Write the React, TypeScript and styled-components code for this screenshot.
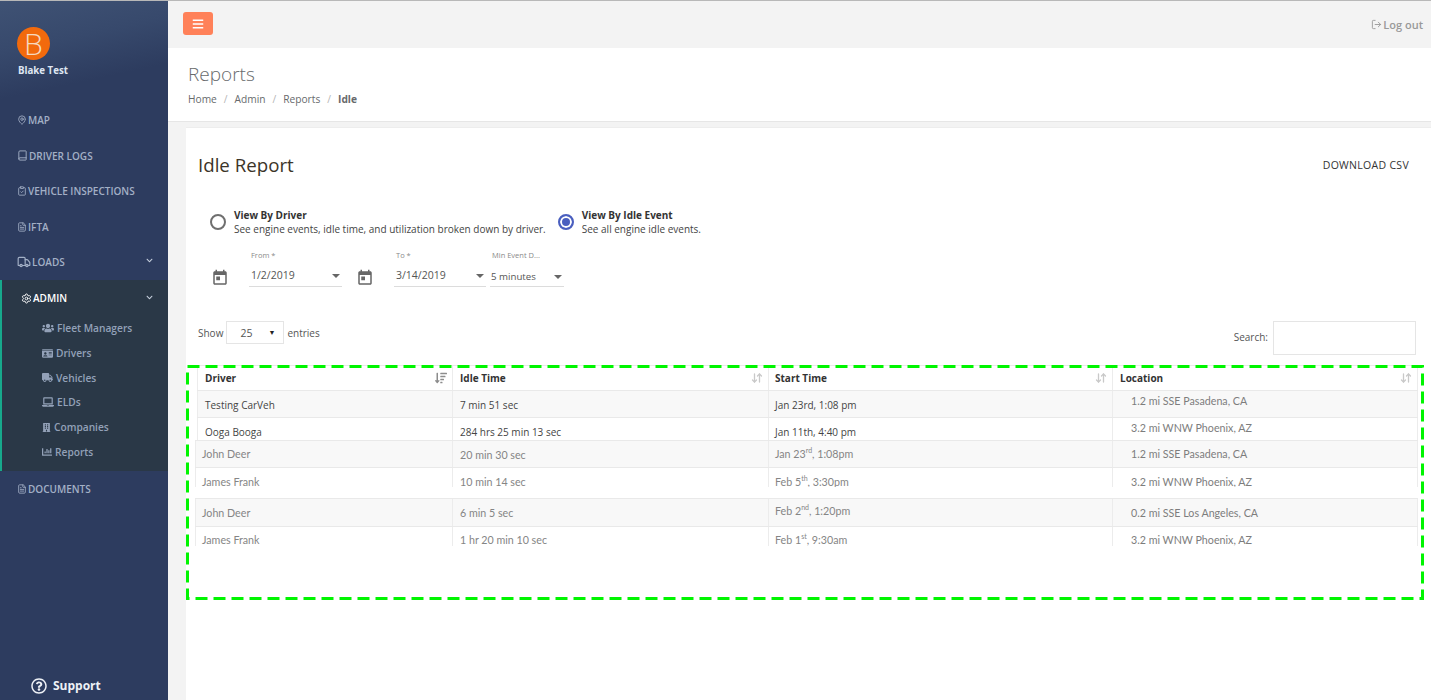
import React, { FC, ReactNode } from 'react'
import styled, { createGlobalStyle } from 'styled-components'
import { ArrowDownUp, Book, ClipboardCheck, FileText, LogOut, MapPin, Settings, Truck } from 'lucide-react'
import {
  FaBars,
  FaBuilding,
  FaChartBar,
  FaChevronDown,
  FaIdCard,
  FaLaptop,
  FaRegQuestionCircle,
  FaSortAmountDown,
  FaTruck,
  FaUsers,
} from 'react-icons/fa'

const GlobalStyle = createGlobalStyle`
  html, body { margin: 0; padding: 0; background: #fff; }
  * { box-sizing: border-box; }
  body { font-family: "Open Sans", "Liberation Sans", sans-serif; }
`

const Shell = styled.div`
  display: flex;
  height: 700px;
  overflow: hidden;
  border-top: 1px solid #b8b8b8;
`

const Sidebar = styled.aside`
  position: relative;
  width: 168px;
  flex: none;
  height: 100%;
  background: #2d3c5f;
  display: flex;
  flex-direction: column;
`

const Profile = styled.div`
  height: 101px;
  padding: 26px 0 0 17px;
  background: linear-gradient(168deg, #3f5274 0%, #37496c 38%, #2d3c5f 72%);
`

const Avatar = styled.div`
  width: 33px;
  height: 33px;
  border-radius: 50%;
  background: #f26a0c;
  color: #f6d9bf;
  font-size: 30px;
  line-height: 33px;
  font-weight: 300;
  text-align: center;
`

const ProfileName = styled.div`
  margin-top: 4px;
  margin-left: 1px;
  font-size: 9.7px;
  line-height: 14px;
  font-weight: 700;
  color: #dfe6f2;
`

const NavItem = styled.div<{ $active?: boolean }>`
  height: 35.5px;
  display: flex;
  align-items: center;
  gap: 1px;
  padding: 0 15px 0 17px;
  font-size: 10px;
  font-weight: 600;
  color: ${(props) => (props.$active ? '#fff' : '#a3b0c6')};
  svg { flex: none; }
`

const NavList = styled.nav`
  padding-top: 0.5px;
`

const NavChevron = styled.span<{ $top?: number }>`
  margin-left: auto;
  display: flex;
  margin-top: ${(props) => props.$top ?? -4}px;
  color: #c5cedc;
`

const AdminBlock = styled.div`
  height: 191px;
  background: #2a3847;
  border-left: 2px solid #17a98c;
`

const AdminHead = styled(NavItem)`
  padding-left: 19px;
  height: 36px;
`

const SubList = styled.div`
  display: flex;
  flex-direction: column;
  padding: 0 0 0 40px;
`

const SubItem = styled.div`
  height: 24.7px;
  display: flex;
  align-items: center;
  gap: 3px;
  font-size: 10.2px;
  font-weight: 600;
  color: #93a1b8;
`

const Support = styled.div`
  position: absolute;
  left: 31px;
  bottom: 6px;
  display: flex;
  align-items: center;
  gap: 6px;
  font-size: 12px;
  font-weight: 700;
  color: #eef1f6;
`

const Main = styled.main`
  flex: 1;
  min-width: 0;
  background: #f3f3f3;
  display: flex;
  flex-direction: column;
`

const TopBar = styled.header`
  height: 47px;
  flex: none;
  padding: 11px 8px 0 15px;
  display: flex;
  justify-content: space-between;
  align-items: flex-start;
`

const MenuButton = styled.button`
  width: 30px;
  height: 23px;
  padding: 0;
  border: 0;
  border-radius: 3px;
  background: #ff8159;
  color: #fff;
  display: flex;
  align-items: center;
  justify-content: center;
`

const LogoutLink = styled.a`
  display: flex;
  align-items: center;
  gap: 1px;
  margin-top: 5px;
  font-size: 11px;
  font-weight: 600;
  color: #999;
`

const PageHead = styled.div`
  height: 74px;
  flex: none;
  background: #fff;
  border-bottom: 1px solid #e6e6e6;
  padding: 13px 0 0 20px;
`

const PageTitle = styled.h2`
  margin: 0;
  font-size: 19px;
  line-height: 26px;
  font-weight: 300;
  color: #676a6c;
`

const Crumbs = styled.div`
  margin-top: 5px;
  display: flex;
  gap: 7px;
  font-size: 10.2px;
  line-height: 14px;
  color: #676a6c;
`

const CrumbSep = styled.span`
  color: #b5b5b5;
`

const CrumbNow = styled.span`
  font-weight: 700;
`

const Card = styled.section`
  flex: 1;
  margin: 5px 0 0 18px;
  background: #fff;
  padding: 23px 0 0 12px;
  border-top: 1px solid #ededed;
`

const CardHead = styled.div`
  display: flex;
  justify-content: space-between;
  align-items: center;
  height: 27px;
  padding-right: 22px;
`

const CardTitle = styled.h1`
  margin: 0;
  font-size: 18.7px;
  font-weight: 400;
  color: #3b3429;
`

const DownloadLink = styled.a`
  margin-top: 1px;
  font-size: 10.5px;
  color: #333;
  letter-spacing: 0.3px;
`

const RadioRow = styled.div`
  display: flex;
  gap: 12px;
  margin-top: 31px;
  padding-left: 12px;
`

const RadioOption = styled.label`
  display: flex;
  align-items: center;
  gap: 8px;
`

const RadioDot = styled.span<{ $checked?: boolean }>`
  width: 16px;
  height: 16px;
  flex: none;
  margin-top: -2px;
  border-radius: 50%;
  border: 2px solid ${(props) => (props.$checked ? '#4a5fbf' : '#6f6f6f')};
  background: ${(props) => (props.$checked ? '#4a5fbf' : '#fff')};
  box-shadow: ${(props) => (props.$checked ? 'inset 0 0 0 2px #fff' : 'none')};
`

const RadioText = styled.div`
  font-size: 10px;
  line-height: 13.5px;
  color: #444;
  b { display: block; font-weight: 700; color: #333; }
`

const FilterRow = styled.div`
  display: flex;
  align-items: flex-start;
  margin-top: 13px;
  padding-left: 13px;
  height: 50px;
`

const CalendarIcon = styled.svg`
  width: 18px;
  height: 18px;
  margin-top: 20px;
  margin-right: 20px;
  fill: #666;
  flex: none;
`

const Field = styled.div<{ $width: number; $gap?: number }>`
  width: ${(props) => props.$width}px;
  margin-right: ${(props) => props.$gap ?? 0}px;
  flex: none;
`

const FieldLabel = styled.div`
  padding-left: 2px;
  font-size: 7.5px;
  line-height: 12px;
  color: #8a8a8a;
  white-space: nowrap;
`

const FieldValue = styled.div<{ $small?: boolean }>`
  height: 26px;
  padding: ${(props) => (props.$small ? '8px 0 0 1px' : '7px 0 0 2px')};
  display: flex;
  align-items: flex-start;
  justify-content: space-between;
  border-bottom: 1px solid #dcdcdc;
  font-size: ${(props) => (props.$small ? '9.7px' : '10.5px')};
  line-height: 15px;
  color: #555;
`

const Caret = styled.span`
  width: 0;
  height: 0;
  margin: 6px 2px 0 0;
  border-left: 4.5px solid transparent;
  border-right: 4.5px solid transparent;
  border-top: 4.5px solid #666;
`

const TableControls = styled.div`
  display: flex;
  justify-content: space-between;
  align-items: flex-start;
  margin-top: 22px;
  padding-right: 15px;
  height: 44px;
`

const ShowGroup = styled.div`
  display: flex;
  align-items: center;
  gap: 3px;
  font-size: 10px;
  color: #555;
`

const ShowSelect = styled.div`
  width: 58px;
  height: 23px;
  padding: 0 8px 0 13px;
  display: flex;
  align-items: center;
  justify-content: space-between;
  border: 1px solid #e5e5e5;
  font-size: 10.5px;
  color: #555;
  &::after { content: '▼'; font-size: 7px; color: #222; }
`

const SearchGroup = styled.div`
  display: flex;
  align-items: flex-end;
  gap: 5px;
  font-size: 10px;
  color: #555;
  span { padding-bottom: 11px; }
`

const SearchBox = styled.div`
  width: 143px;
  height: 34px;
  border: 1px solid #e5e5e5;
`

const TableZone = styled.div`
  position: relative;
  height: 235px;
  margin-left: -1px;
`

const Rows = styled.div`
  display: flex;
  flex-direction: column;
  width: 1221px;
`

const Row = styled.div<{ $height: number; $shaded?: boolean; $gapAfter?: number; $pasted?: boolean }>`
  height: ${(props) => props.$height}px;
  margin-bottom: ${(props) => props.$gapAfter ?? 0}px;
  margin-left: ${(props) => (props.$pasted ? '-2px' : '0')};
  display: grid;
  grid-template-columns: ${(props) => (props.$pasted ? '257px' : '255px')} 316px 344px 306px;
  overflow: hidden;
  background: ${(props) => (props.$shaded ? '#f8f8f8' : '#fff')};
  border-top: 1px solid #e9e9e9;
  font-family: ${(props) => (props.$pasted ? 'Lato, "Open Sans", sans-serif' : '"Open Sans", sans-serif')};
  font-size: ${(props) => (props.$pasted ? '10.7px' : '10px')};
  color: ${(props) => (props.$pasted ? '#858585' : '#444')};
`

const Cell = styled.div<{ $left?: number; $top?: number }>`
  padding-left: ${(props) => props.$left ?? 7}px;
  padding-top: ${(props) => props.$top ?? 7}px;
  line-height: 14px;
  white-space: nowrap;
  border-left: 1px solid #ececec;
  &:last-child { border-right: 1px solid #ececec; }
  sup { font-size: 7px; line-height: 0; }
`

const HeadCell = styled(Cell)`
  display: flex;
  justify-content: space-between;
  align-items: center;
  padding: 0 5px 0 ${(props) => props.$left ?? 7}px;
  font-size: 10px;
  font-weight: 700;
  color: #333;
`

const SortIcon = styled.span<{ $on?: boolean }>`
  display: flex;
  color: ${(props) => (props.$on ? '#8c8c8c' : '#c9c9c9')};
`

const LocationCell = styled(Cell)`
  padding-left: 18px;
  font-family: Lato, "Open Sans", sans-serif;
  font-size: 10.7px;
  color: #7d7d7d;
`

const DashFrame = styled.svg`
  position: absolute;
  left: -11px;
  top: 0;
  width: 1238px;
  height: 235px;
  overflow: visible;
  pointer-events: none;
`

const mainNav: { label: string; icon: ReactNode; chevron?: boolean }[] = [
  { label: 'MAP', icon: <MapPin size={10} /> },
  { label: 'DRIVER LOGS', icon: <Book size={11} /> },
  { label: 'VEHICLE INSPECTIONS', icon: <ClipboardCheck size={10} /> },
  { label: 'IFTA', icon: <FileText size={10} /> },
  { label: 'LOADS', icon: <Truck size={14} />, chevron: true },
]

const subNav: { label: string; icon: ReactNode }[] = [
  { label: 'Fleet Managers', icon: <FaUsers size={12} /> },
  { label: 'Drivers', icon: <FaIdCard size={11} /> },
  { label: 'Vehicles', icon: <FaTruck size={11} /> },
  { label: 'ELDs', icon: <FaLaptop size={12} /> },
  { label: 'Companies', icon: <FaBuilding size={9} /> },
  { label: 'Reports', icon: <FaChartBar size={10} /> },
]

const headers = ['Driver', 'Idle Time', 'Start Time', 'Location']

const CalendarGlyph: FC = () => (
  <CalendarIcon viewBox='0 0 24 24'>
    <path d='M19 3h-1V1h-2v2H8V1H6v2H5c-1.11 0-1.99.9-1.99 2L3 19c0 1.1.89 2 2 2h14c1.1 0 2-.9 2-2V5c0-1.1-.9-2-2-2zm0 16H5V8h14v11zM7 10h5v5H7z' />
  </CalendarIcon>
)

const App: FC = () => {
  return (
    <Shell>
      <GlobalStyle />
      <Sidebar>
        <Profile>
          <Avatar>B</Avatar>
          <ProfileName>Blake Test</ProfileName>
        </Profile>
        <NavList>
          {mainNav.map((item) => (
            <NavItem key={item.label}>
              {item.icon}
              {item.label}
              {item.chevron && (
                <NavChevron>
                  <FaChevronDown size={7} />
                </NavChevron>
              )}
            </NavItem>
          ))}
        </NavList>
        <AdminBlock>
          <AdminHead $active>
            <Settings size={11} />
            ADMIN
            <NavChevron $top={-2}>
              <FaChevronDown size={7} />
            </NavChevron>
          </AdminHead>
          <SubList>
            {subNav.map((item) => (
              <SubItem key={item.label}>
                {item.icon}
                {item.label}
              </SubItem>
            ))}
          </SubList>
        </AdminBlock>
        <NavItem>
          <FileText size={10} />
          DOCUMENTS
        </NavItem>
        <Support>
          <FaRegQuestionCircle size={16} />
          Support
        </Support>
      </Sidebar>
      <Main>
        <TopBar>
          <MenuButton aria-label='Toggle menu'>
            <FaBars size={12} />
          </MenuButton>
          <LogoutLink>
            <LogOut size={11} />
            Log out
          </LogoutLink>
        </TopBar>
        <PageHead>
          <PageTitle>Reports</PageTitle>
          <Crumbs>
            <span>Home</span>
            <CrumbSep>/</CrumbSep>
            <span>Admin</span>
            <CrumbSep>/</CrumbSep>
            <span>Reports</span>
            <CrumbSep>/</CrumbSep>
            <CrumbNow>Idle</CrumbNow>
          </Crumbs>
        </PageHead>
        <Card>
          <CardHead>
            <CardTitle>Idle Report</CardTitle>
            <DownloadLink>DOWNLOAD CSV</DownloadLink>
          </CardHead>
          <RadioRow>
            <RadioOption>
              <RadioDot />
              <RadioText>
                <b>View By Driver</b>
                See engine events, idle time, and utilization broken down by driver.
              </RadioText>
            </RadioOption>
            <RadioOption>
              <RadioDot $checked />
              <RadioText>
                <b>View By Idle Event</b>
                See all engine idle events.
              </RadioText>
            </RadioOption>
          </RadioRow>
          <FilterRow>
            <CalendarGlyph />
            <Field $width={93} $gap={14}>
              <FieldLabel>From *</FieldLabel>
              <FieldValue>
                1/2/2019
                <Caret />
              </FieldValue>
            </Field>
            <CalendarGlyph />
            <Field $width={92} $gap={4}>
              <FieldLabel>To *</FieldLabel>
              <FieldValue>
                3/14/2019
                <Caret />
              </FieldValue>
            </Field>
            <Field $width={74}>
              <FieldLabel>Min Event D...</FieldLabel>
              <FieldValue $small>
                5 minutes
                <Caret />
              </FieldValue>
            </Field>
          </FilterRow>
          <TableControls>
            <ShowGroup>
              Show
              <ShowSelect>25</ShowSelect>
              entries
            </ShowGroup>
            <SearchGroup>
              <span>Search:</span>
              <SearchBox />
            </SearchGroup>
          </TableControls>
          <TableZone>
            <Rows>
              <Row $height={25}>
                {headers.map((title, index) => (
                  <HeadCell key={title} $left={index === 2 ? 6 : 7}>
                    {title}
                    <SortIcon $on={index === 0}>
                      {index === 0 ? (
                        <FaSortAmountDown size={12} />
                      ) : (
                        <ArrowDownUp size={12} strokeWidth={2.6} />
                      )}
                    </SortIcon>
                  </HeadCell>
                ))}
              </Row>
              <Row $height={27} $shaded>
                <Cell>Testing CarVeh</Cell>
                <Cell>7 min 51 sec</Cell>
                <Cell $left={6}>Jan 23rd, 1:08 pm</Cell>
                <LocationCell $top={3}>1.2 mi SSE Pasadena, CA</LocationCell>
              </Row>
              <Row $height={23}>
                <Cell>Ooga Booga</Cell>
                <Cell>284 hrs 25 min 13 sec</Cell>
                <Cell $left={6}>Jan 11th, 4:40 pm</Cell>
                <LocationCell $top={3}>3.2 mi WNW Phoenix, AZ</LocationCell>
              </Row>
              <Row $height={27} $shaded $pasted>
                <Cell $left={6} $top={6}>John Deer</Cell>
                <Cell>20 min 30 sec</Cell>
                <Cell $left={6} $top={6}>
                  Jan 23<sup>rd</sup>, 1:08pm
                </Cell>
                <LocationCell $top={6}>1.2 mi SSE Pasadena, CA</LocationCell>
              </Row>
              <Row $height={20} $gapAfter={11} $pasted>
                <Cell $left={6}>James Frank</Cell>
                <Cell>10 min 14 sec</Cell>
                <Cell $left={6}>
                  Feb 5<sup>th</sup>, 3:30pm
                </Cell>
                <LocationCell>3.2 mi WNW Phoenix, AZ</LocationCell>
              </Row>
              <Row $height={28} $shaded $pasted>
                <Cell $left={6}>John Deer</Cell>
                <Cell>6 min 5 sec</Cell>
                <Cell $left={6} $top={5}>
                  Feb 2<sup>nd</sup>, 1:20pm
                </Cell>
                <LocationCell>0.2 mi SSE Los Angeles, CA</LocationCell>
              </Row>
              <Row $height={20} $pasted>
                <Cell $left={6} $top={6}>James Frank</Cell>
                <Cell $top={6}>1 hr 20 min 10 sec</Cell>
                <Cell $left={6} $top={6}>
                  Feb 1<sup>st</sup>, 9:30am
                </Cell>
                <LocationCell $top={6}>3.2 mi WNW Phoenix, AZ</LocationCell>
              </Row>
            </Rows>
            <DashFrame>
              <rect
                x='1.5'
                y='1.5'
                width='1235'
                height='232'
                fill='none'
                stroke='#00f500'
                strokeWidth='3'
                strokeDasharray='12 6'
              />
            </DashFrame>
          </TableZone>
        </Card>
      </Main>
    </Shell>
  )
}

export default App
